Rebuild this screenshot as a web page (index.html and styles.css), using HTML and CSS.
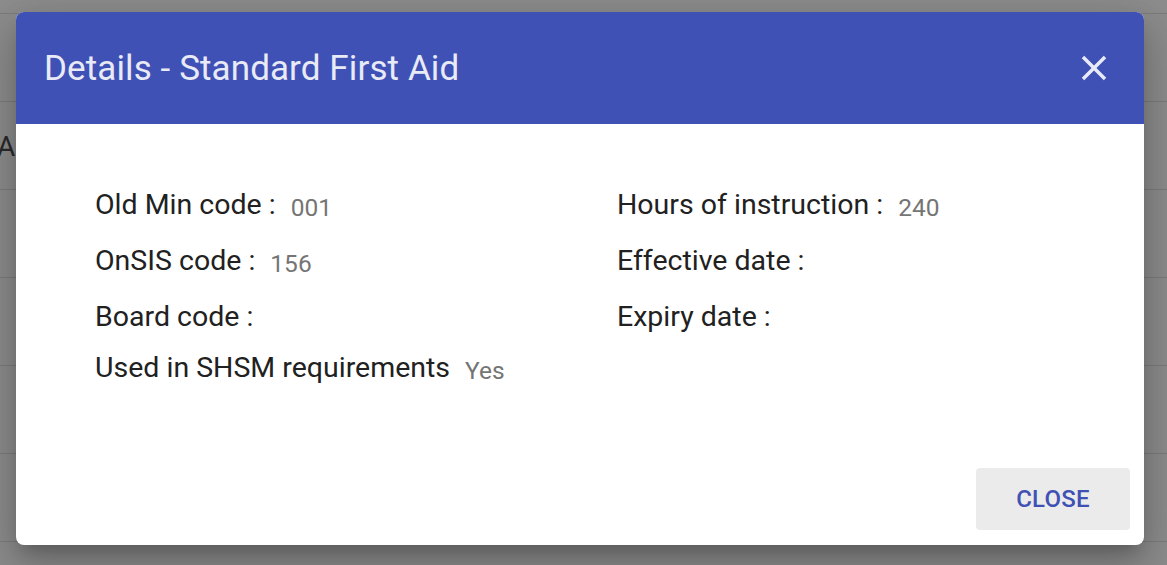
FILE: index.html
```html
<!DOCTYPE html>
<html>
<head>
<meta charset="utf-8">
<link rel="stylesheet" href="styles.css">
</head>
<body>
<div class="backdrop">
  <div class="bg-row"></div>
  <div class="bg-row"></div>
  <div class="bg-row"><span class="bg-cell">A</span></div>
  <div class="bg-row"></div>
  <div class="bg-row"></div>
  <div class="bg-row"></div>
  <div class="bg-row"></div>
</div>
<div class="dialog">
  <div class="dialog-header">
    <h2 class="dialog-title">Details - Standard First Aid</h2>
    <button class="icon-btn" aria-label="Close">
      <svg viewBox="0 0 24 24" width="42" height="42"><path fill="currentColor" d="M19 6.41L17.59 5 12 10.59 6.41 5 5 6.41 10.59 12 5 17.59 6.41 19 12 13.41 17.59 19 19 17.59 13.41 12z"/></svg>
    </button>
  </div>
  <div class="dialog-body">
    <div class="col">
      <div class="field"><span class="label">Old Min code :</span><span class="value">001</span></div>
      <div class="field"><span class="label">OnSIS code :</span><span class="value">156</span></div>
      <div class="field short"><span class="label">Board code :</span></div>
      <div class="field"><span class="label">Used in SHSM requirements</span><span class="value">Yes</span></div>
    </div>
    <div class="col">
      <div class="field"><span class="label">Hours of instruction :</span><span class="value">240</span></div>
      <div class="field"><span class="label">Effective date :</span></div>
      <div class="field"><span class="label">Expiry date :</span></div>
    </div>
  </div>
  <div class="dialog-actions">
    <button class="btn-close">CLOSE</button>
  </div>
</div>
</body>
</html>
```
FILE: styles.css
```css
html, body {
  margin: 0;
  padding: 0;
}
body {
  width: 1167px;
  height: 565px;
  overflow: hidden;
  background: #8d8d8d;
  font-family: Roboto, "Liberation Sans", sans-serif;
  position: relative;
}
.backdrop {
  display: flex;
  flex-direction: column;
  margin-top: -74px;
}
.bg-row {
  height: 87px;
  border-bottom: 1px solid #7c7c7c;
  display: flex;
  align-items: center;
}
.bg-cell {
  font-size: 28px;
  color: #2a2a2a;
  margin-left: -3px;
  margin-top: 2px;
}
.dialog {
  position: absolute;
  left: 16px;
  top: 12px;
  width: 1128px;
  height: 533px;
  background: #fff;
  border-radius: 8px;
  overflow: hidden;
  box-shadow: 0 11px 15px -7px rgba(0,0,0,.2), 0 24px 38px 3px rgba(0,0,0,.14), 0 9px 46px 8px rgba(0,0,0,.12);
  display: flex;
  flex-direction: column;
}
.dialog-header {
  height: 112px;
  background: #3f51b5;
  display: flex;
  align-items: center;
  justify-content: space-between;
  padding: 0 29px 0 28px;
  flex-shrink: 0;
}
.dialog-title {
  margin: 0;
  font-weight: 400;
  font-size: 35px;
  letter-spacing: 0.1px;
  color: #e8eaf6;
}
.icon-btn {
  background: none;
  border: 0;
  padding: 0;
  color: #e8eaf6;
  display: flex;
  width: 42px;
  height: 42px;
  margin-top: -1px;
}
.dialog-body {
  flex: 1;
  display: grid;
  grid-template-columns: 522px 1fr;
  padding: 61px 0 0 79px;
}
.col {
  display: flex;
  flex-direction: column;
}
.field {
  height: 56px;
  display: flex;
  align-items: baseline;
  color: #212121;
}
.field.short {
  height: 51px;
}
.label {
  font-size: 28.5px;
  line-height: 40px;
}
.value {
  font-size: 24.5px;
  color: #757575;
  margin-left: 15px;
  position: relative;
  top: 2px;
}
.dialog-actions {
  display: flex;
  justify-content: flex-end;
  padding: 0 14px 15px 0;
}
.btn-close {
  width: 154px;
  height: 62px;
  background: #ebebeb;
  border: 0;
  border-radius: 4px;
  font-family: Roboto, "Liberation Sans", sans-serif;
  font-size: 24px;
  font-weight: 500;
  color: #3f51b5;
  letter-spacing: 0.2px;
}
```
